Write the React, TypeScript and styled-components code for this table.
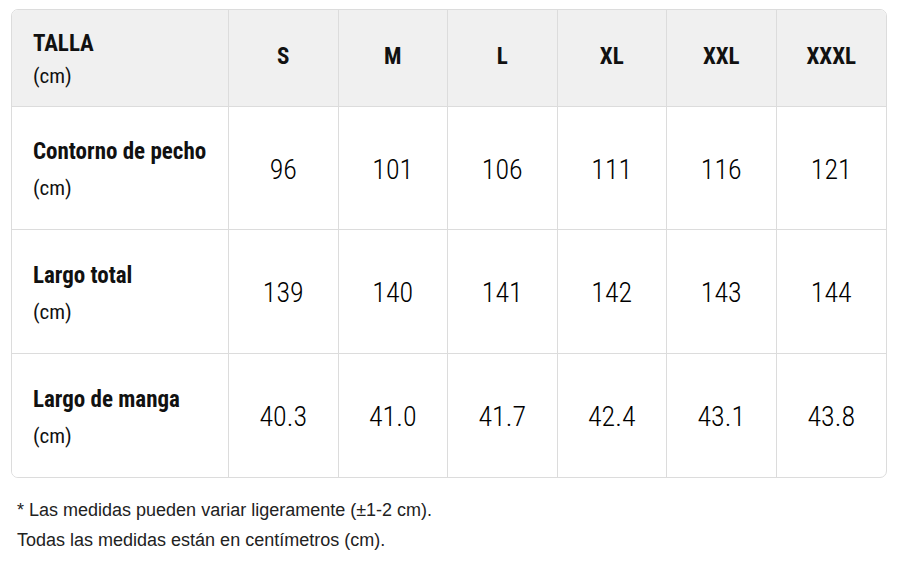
import { type FC } from "react";
import styled, { createGlobalStyle } from "styled-components";

const GlobalStyle = createGlobalStyle`
  html, body {
    margin: 0;
    padding: 0;
    background: #ffffff;
  }
  body {
    font-family: "Roboto Condensed", "Roboto", sans-serif;
    color: #111;
  }
`;

const sizes = ["S", "M", "L", "XL", "XXL", "XXXL"];

const rows = [
  { label: "Contorno de pecho", values: ["96", "101", "106", "111", "116", "121"] },
  { label: "Largo total", values: ["139", "140", "141", "142", "143", "144"] },
  { label: "Largo de manga", values: ["40.3", "41.0", "41.7", "42.4", "43.1", "43.8"] },
];

const App: FC = () => {
  return (
    <Page>
      <GlobalStyle />
      <Table>
        <Label $head>
          <Title>TALLA</Title>
          <Unit>(cm)</Unit>
        </Label>
        {sizes.map((s, i) => (
          <SizeCell key={s} $last={i === sizes.length - 1}>
            {s}
          </SizeCell>
        ))}

        {rows.map((row, r) => {
          const bottom = r === rows.length - 1;
          return [
            <Label key={row.label} $bottom={bottom}>
              <Title>{row.label}</Title>
              <Unit>(cm)</Unit>
            </Label>,
            ...row.values.map((v, i) => (
              <Value key={row.label + i} $last={i === row.values.length - 1} $bottom={bottom}>
                {v}
              </Value>
            )),
          ];
        })}
      </Table>

      <Notes>
        <Note>* Las medidas pueden variar ligeramente (±1-2 cm).</Note>
        <Note>Todas las medidas están en centímetros (cm).</Note>
      </Notes>
    </Page>
  );
};

export default App;

const line = "1px solid #dcdcdc";

const Page = styled.div`
  padding: 9px 13px 0 11px;
`;

const Table = styled.div`
  width: 876px;
  display: grid;
  grid-template-columns: 217px repeat(6, 1fr);
  grid-template-rows: 97px 123px 124px 123px;
  border: ${line};
  border-radius: 7px;
  overflow: hidden;
  box-sizing: border-box;
`;

const Cell = styled.div<{ $last?: boolean; $bottom?: boolean }>`
  border-right: ${(p) => (p.$last ? "none" : line)};
  border-bottom: ${(p) => (p.$bottom ? "none" : line)};
  display: flex;
`;

const Label = styled(Cell)<{ $head?: boolean }>`
  flex-direction: column;
  justify-content: ${(p) => (p.$head ? "flex-start" : "center")};
  padding: ${(p) => (p.$head ? "19px 0 0 21px" : "4px 0 0 21px")};
  background: ${(p) => (p.$head ? "#f0f0f0" : "#ffffff")};
  gap: ${(p) => (p.$head ? "2px" : "6px")};
`;

const Title = styled.span`
  font-size: 23px;
  font-weight: 700;
  line-height: 30px;
`;

const Unit = styled.span`
  font-size: 21px;
  font-weight: 400;
  line-height: 30px;
`;

const SizeCell = styled(Cell)`
  background: #f0f0f0;
  align-items: center;
  justify-content: center;
  font-size: 23px;
  font-weight: 700;
  padding-bottom: 3px;
`;

const Value = styled(Cell)`
  align-items: center;
  justify-content: center;
  font-size: 28px;
  font-weight: 300;
  color: #000;
  padding-top: 2px;
`;

const Notes = styled.div`
  margin-top: 22px;
  padding-left: 6px;
  font-family: "Liberation Sans", Arial, sans-serif;
  font-size: 18px;
  color: #222;
`;

const Note = styled.p`
  margin: 0 0 9px;
  line-height: 21px;
`;
